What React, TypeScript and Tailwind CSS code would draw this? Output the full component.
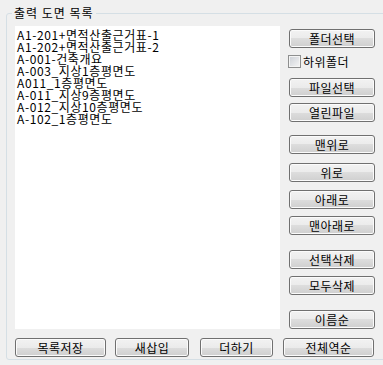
import React from 'react';

const files = [
  'A1-201+면적산출근거표-1',
  'A1-202+면적산출근거표-2',
  'A-001-건축개요',
  'A-003_지상1층평면도',
  'A011_1층평면도',
  'A-011_지상9층평면도',
  'A-012_지상10층평면도',
  'A-102_1층평면도',
];

function WinButton({ label, className = '' }: { label: string; className?: string }) {
  return (
    <button
      className={
        'h-[19px] flex items-center justify-center border border-[#707070] rounded-[3px] text-[12px] leading-[12px] tracking-[0.5px] text-black shadow-[inset_0_0_0_1px_#fbfbfb] bg-[linear-gradient(#f2f2f2_0%,#ebebeb_50%,#dddddd_50%,#cfcfcf_100%)] ' +
        className
      }
    >
      {label}
    </button>
  );
}

export default function App() {
  return (
    <div
      className="w-[383px] h-[365px] overflow-hidden bg-[#f0f0f0] pt-[13px] pl-[6px] text-black"
      style={{ fontFamily: '"Noto Sans CJK KR", "Noto Sans", sans-serif' }}
    >
      <div className="relative w-[400px] h-[347px] border border-[#d5dfe5] rounded-[3px] pl-[8px] pt-[12px]">
        <span className="absolute left-[5px] top-[-8px] px-[2px] bg-[#f0f0f0] text-[12px] leading-[14px] tracking-[1px]">
          출력 도면 목록
        </span>

        <div className="flex">
          <div className="w-[265px] h-[303px] bg-white pl-[2px] pt-[3px]">
            {files.map((f) => (
              <div key={f} className="text-[12px] leading-[12px] h-[12px] whitespace-nowrap tracking-[0.6px]">
                {f}
              </div>
            ))}
          </div>

          <div className="ml-[9px] w-[86px] flex flex-col">
            <WinButton label="폴더선택" className="mt-[3px]" />
            <label className="mt-[7px] flex items-center gap-[2px] ml-[-1px] text-[12px] leading-[13px] tracking-[0.5px]">
              <span className="w-[13px] h-[13px] border border-[#8e8f8f] bg-[linear-gradient(135deg,#cbcfd5,#f6f6f6)] shadow-[inset_0_0_0_1px_#f4f4f4]" />
              하위폴더
            </label>
            <WinButton label="파일선택" className="mt-[10px]" />
            <WinButton label="열린파일" className="mt-[6px]" />
            <WinButton label="맨위로" className="mt-[13px]" />
            <WinButton label="위로" className="mt-[9px]" />
            <WinButton label="아래로" className="mt-[8px]" />
            <WinButton label="맨아래로" className="mt-[7px]" />
            <WinButton label="선택삭제" className="mt-[15px]" />
            <WinButton label="모두삭제" className="mt-[7px]" />
            <WinButton label="이름순" className="mt-[15px]" />
          </div>
        </div>

        <div className="flex mt-[9px]">
          <WinButton label="목록저장" className="w-[91px]" />
          <WinButton label="새삽입" className="ml-[9px] w-[74px]" />
          <WinButton label="더하기" className="ml-[11px] w-[73px]" />
          <WinButton label="전체역순" className="ml-[10px] w-[91px]" />
        </div>
      </div>
    </div>
  );
}
